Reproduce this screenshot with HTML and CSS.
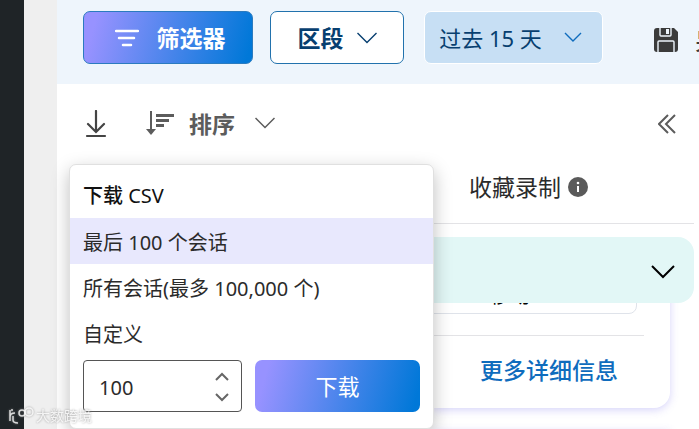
FILE: index.html
```
<!DOCTYPE html>
<html lang="zh-CN">
<head>
    <meta charset="UTF-8">
    <meta name="viewport" content="width=device-width, initial-scale=1.0">
    <title>会话录制</title>
    <link rel="stylesheet" href="styles.css">
</head>
<body>
<div class="app">
    <div class="rail"></div>
    <div class="gutter"></div>

    <main class="main">
        <header class="topbar">
            <button class="btn btn-primary btn-filter" type="button">
                <svg width="24" height="20" viewBox="0 0 24 20" fill="none" stroke="currentColor" stroke-width="2.500" stroke-linecap="round">
                    <path d="M1 3h22M4 10h15M8 17h8"/>
                </svg>
                <span>筛选器</span>
            </button>
            <button class="btn btn-segment" type="button">
                <span>区段</span>
                <svg width="20" height="12" viewBox="0 0 20 12" fill="none" stroke="currentColor" stroke-width="1.400">
                    <path d="M.5 1l9.500 9.500 9.500-9.500"/>
                </svg>
            </button>
            <button class="btn btn-range" type="button">
                <span>过去 15 天</span>
                <svg class="chevron-blue" width="18" height="12" viewBox="0 0 18 12" fill="none" stroke="currentColor" stroke-width="1.400">
                    <path d="M1 1l8 8 8-8"/>
                </svg>
            </button>
            <button class="save" type="button">
                <svg width="24" height="24" viewBox="0 0 24 24">
                    <path fill="#3b3b3b" d="M3 0h17l4 4v17a3 3 0 0 1-3 3H3a3 3 0 0 1-3-3V3a3 3 0 0 1 3-3z"/>
                    <path fill="none" stroke="#eef5fc" stroke-width="1.400" d="M6 0v7a1 1 0 0 0 1 1h9a1 1 0 0 0 1-1V0M4 24V14a1 1 0 0 1 1-1h14a1 1 0 0 1 1 1v10"/>
                    <path fill="#eef5fc" d="M12 1h3v5h-3z"/>
                </svg>
                <span>另存为</span>
            </button>
        </header>

        <div class="toolbar">
            <button class="tool" type="button" aria-label="下载">
                <svg width="22" height="28" viewBox="0 0 22 28" fill="none" stroke="#444" stroke-width="2.200" stroke-linecap="round">
                    <path d="M11 1v20M3 14l8 8 8-8M2 26h18"/>
                </svg>
            </button>
            <button class="tool tool-sort" type="button">
                <svg width="28" height="24" viewBox="0 0 28 24" fill="none" stroke="currentColor">
                    <path stroke-width="2" d="M5 0v20"/>
                    <path fill="currentColor" stroke="none" d="M0 18h10l-5 6z"/>
                    <path stroke-width="3" d="M10 4.500h18M10 9.500h13M10 14.500h8"/>
                </svg>
                <span>排序</span>
                <svg width="20" height="12" viewBox="0 0 20 12" fill="none" stroke="currentColor" stroke-width="1.500">
                    <path d="M.5 1l9.500 9.500 9.500-9.500"/>
                </svg>
            </button>
            <button class="tool tool-collapse" type="button" aria-label="折叠">
                <svg width="18" height="20" viewBox="0 0 18 20" fill="none" stroke="currentColor" stroke-width="2">
                    <path d="M10 1l-9 9 9 9M17 1l-9 9 9 9"/>
                </svg>
            </button>

            <form class="menu">
                <h2>下载 <span>CSV</span></h2>
                <button class="menu-item active" type="button">最后 100 个会话</button>
                <button class="menu-item" type="button">所有会话(最多 100,000 个)</button>
                <label class="menu-label" for="count">自定义</label>
                <div class="menu-row">
                    <div class="spinner">
                        <input type="text" inputmode="numeric" id="count" value="100">
                        <div class="steps">
                            <button type="button" aria-label="增加">
                                <svg width="14" height="9" viewBox="0 0 14 9" fill="none" stroke="currentColor" stroke-width="2"><path d="M1 8l6-6 6 6"/></svg>
                            </button>
                            <button type="button" aria-label="减少">
                                <svg width="14" height="9" viewBox="0 0 14 9" fill="none" stroke="currentColor" stroke-width="2"><path d="M1 1l6 6 6-6"/></svg>
                            </button>
                        </div>
                    </div>
                    <button class="btn btn-primary btn-download" type="button">下载</button>
                </div>
            </form>
        </div>

        <section class="details">
            <div class="details-head">
                <span>收藏录制</span>
                <svg width="20" height="20" viewBox="0 0 20 20">
                    <circle cx="10" cy="10" r="10" fill="#5a5a5a"/>
                    <path d="M10 9v6" stroke="#fff" stroke-width="2"/>
                    <circle cx="10" cy="6" r="1.300" fill="#fff"/>
                </svg>
            </div>
            <div class="banner">
                <svg width="24" height="14" viewBox="0 0 24 14" fill="none" stroke="#000" stroke-width="2">
                    <path d="M1 1l11 11L23 1"/>
                </svg>
            </div>
            <div class="card">
                <div class="chip">移动</div>
                <div class="card-foot">
                    <a href="#">更多详细信息</a>
                </div>
            </div>
            <div class="card card-next"></div>
        </section>
    </main>

    <div class="watermark">
        <svg width="26" height="18" viewBox="0 0 26 18" fill="none" stroke="currentColor" stroke-width="1.500">
            <path d="M2 3v11M7 6c-4 0-5 2-5 4M5 9v4q0 3 5 3M3 3h2"/>
            <circle cx="14" cy="6" r="3"/>
            <circle cx="21" cy="5" r="4"/>
        </svg>
        <span>大数跨境</span>
    </div>
</div>
</body>
</html>
```
FILE: styles.css
```
* {
    box-sizing: border-box;
    margin: 0;
    padding: 0;
}

body {
    font-family: "Noto Sans", "Noto Sans CJK SC", sans-serif;
    font-size: 20px;
    color: #2b2b2b;
    background-color: white;
    overflow: hidden;
}

button, input {
    font: inherit;
    color: inherit;
    border: none;
    background: none;
}

button {
    cursor: pointer;
}

svg {
    display: block;
    flex-shrink: 0;
}

.app {
    position: relative;
    display: flex;
    height: 100vh;
    overflow: hidden;
}

.rail {
    flex: 0 0 24px;
    background-color: #1f2427;
}

.gutter {
    flex: 0 0 33px;
    background-color: #efefef;
}

.main {
    flex: 1;
    min-width: 0;
}

/* Top bar */
.topbar {
    display: flex;
    align-items: center;
    height: 84px;
    padding: 0 0 9px 26px;
    background-color: #eef5fc;
    overflow: hidden;
    white-space: nowrap;
}

.btn {
    display: flex;
    flex-shrink: 0;
    align-items: center;
    justify-content: center;
    height: 53px;
    border-radius: 7px;
    font-size: 23px;
    line-height: 28px;
}

.btn-primary {
    color: white;
    background: linear-gradient(105deg, #9792ff 8%, #0078d8 96%);
}

.btn-filter {
    width: 170px;
    gap: 18px;
    padding-left: 4px;
    font-weight: bold;
    border: 1px solid #2b7bbf;
    background-origin: border-box;
}

.btn-segment {
    width: 134px;
    margin-left: 17px;
    gap: 13px;
    font-weight: bold;
    color: #073f70;
    background-color: white;
    border: 1px solid #2272ad;
}

.btn-range {
    width: 179px;
    margin-left: 20px;
    padding-right: 6px;
    gap: 22px;
    font-size: 22px;
    color: #073f70;
    background-color: #c7dff4;
    border: 1px solid white;
}

.chevron-blue {
    color: #0f6cbd;
}

.save {
    display: flex;
    flex-shrink: 0;
    align-items: center;
    gap: 17px;
    margin-left: 51px;
    padding-top: 4px;
    font-size: 23px;
    font-weight: 500;
    line-height: 28px;
    color: #3b3b3b;
}

/* Toolbar */
.toolbar {
    position: relative;
    display: flex;
    align-items: center;
    height: 80px;
    padding: 0 23px 0 28px;
}

.tool {
    display: flex;
    align-items: center;
    color: #5c5c5c;
}

.tool-sort {
    gap: 15px;
    margin-left: 39px;
    padding-bottom: 3px;
    font-size: 23px;
    font-weight: bold;
}

.tool-sort svg:last-child {
    margin-left: 5px;
}

.tool-collapse {
    margin-left: auto;
}

/* Download menu */
.menu {
    position: absolute;
    top: 80px;
    left: 12px;
    z-index: 3;
    width: 365px;
    padding-bottom: 16px;
    background-color: white;
    border: 1px solid #e0e0e0;
    border-radius: 7px;
    box-shadow: 0 6px 18px rgba(0, 0, 0, 0.25);
}

.menu h2 {
    padding: 8px 13px 0;
    font-size: 20px;
    font-weight: 500;
    line-height: 45px;
    color: #111;
}

.menu h2 span {
    font-weight: normal;
}

.menu-item {
    display: block;
    width: 100%;
    padding: 3px 13px 0;
    line-height: 43px;
    text-align: left;
}

.menu-item.active {
    background-color: #e8e8fd;
}

.menu-label {
    display: block;
    padding: 0 13px;
    line-height: 50px;
}

.menu-row {
    display: flex;
    gap: 13px;
    padding: 0 13px;
}

.spinner {
    display: flex;
    width: 159px;
    height: 52px;
    padding: 2px 10px 0 15px;
    border: 1px solid #555;
    border-radius: 4px;
}

.spinner input {
    flex: 1;
    min-width: 0;
    font-size: 20px;
    outline: none;
}

.steps {
    display: flex;
    flex-direction: column;
    justify-content: space-evenly;
    color: #666;
}

.steps button {
    padding: 2px;
}

.btn-download {
    flex: 1;
    height: 52px;
    font-size: 22px;
}

/* Details column */
.details {
    padding: 0 5px 0 376px;
}

.details-head {
    display: flex;
    align-items: center;
    gap: 7px;
    height: 60px;
    padding: 0 0 14px 36px;
    font-size: 23px;
    line-height: 28px;
    border-bottom: 1px solid #e3e3e6;
}

.banner {
    position: relative;
    z-index: 1;
    display: flex;
    align-items: center;
    justify-content: flex-end;
    height: 66px;
    margin-top: 13px;
    padding: 3px 19px 0 0;
    background-color: #e2f7f6;
    border-radius: 0 16px 16px 0;
}

.card {
    margin: -30px 24px 0 0;
    padding-right: 26px;
    background-color: white;
    border-radius: 0 0 16px 0;
    box-shadow: 0 2px 8px rgba(120, 110, 240, 0.3);
}

.chip {
    height: 41px;
    margin-right: 7px;
    padding-left: 56px;
    line-height: 44px;
    color: black;
    border: 1px solid #dfe3ea;
    border-radius: 0 0 8px 0;
}

.card-foot {
    margin-top: 21px;
    padding: 0 0 4px 47px;
    font-size: 23px;
    line-height: 68px;
    border-top: 1px solid #e3e3e6;
}

.card-foot a {
    color: #0f6cbd;
    font-weight: 500;
    text-decoration: none;
}

.card-next {
    height: 60px;
    margin-top: 22px;
}

/* Watermark */
.watermark {
    position: absolute;
    left: 8px;
    bottom: 2px;
    z-index: 4;
    display: flex;
    align-items: center;
    gap: 2px;
    font-size: 14px;
    line-height: 22px;
    color: rgba(255, 255, 255, 0.8);
    filter: drop-shadow(0 0 1px #888);
}
```
